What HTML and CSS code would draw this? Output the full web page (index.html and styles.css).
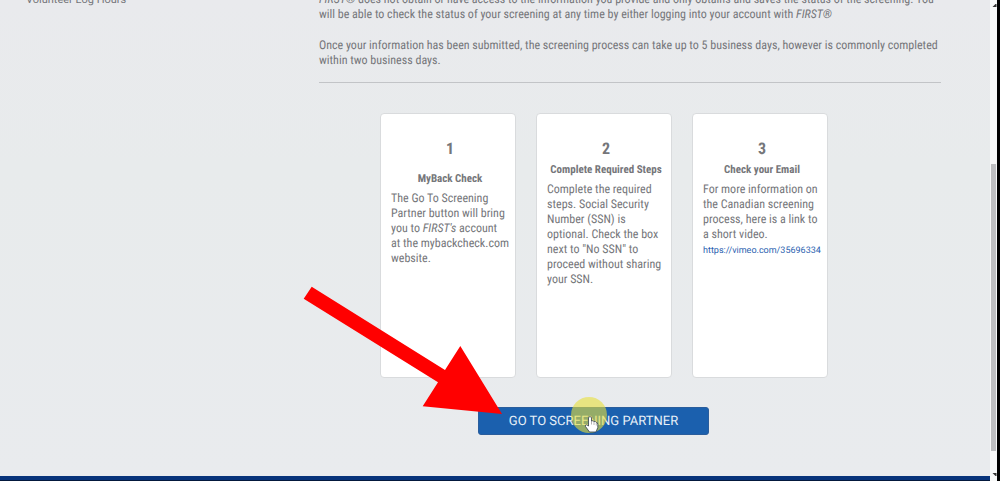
FILE: index.html
```html
<!DOCTYPE html>
<html lang="en">
<head>
<meta charset="utf-8">
<meta name="viewport" content="width=device-width, initial-scale=1">
<title>Youth Protection Screening</title>
<link rel="stylesheet" href="styles.css">
</head>
<body>
<div class="window">
  <div class="page">
    <div class="layout">
      <nav class="sidebar"><a href="#hours">Volunteer Log Hours</a></nav>
      <main class="content">
        <p><em>FIRST</em>® does not obtain or have access to the information you provide and only obtains and saves the status of the screening. You<br>will be able to check the status of your screening at any time by either logging into your account with <em>FIRST®</em></p>
        <p>Once your information has been submitted, the screening process can take up to 5 business days, however is commonly completed<br>within two business days.</p>
        <hr class="rule">
        <div class="steps">
          <section class="card">
            <div class="number">1</div>
            <h2 class="title title-low">MyBack Check</h2>
            <p>The Go To Screening<br>Partner button will bring<br>you to <em>FIRST's</em> account<br>at the mybackcheck.com<br>website.</p>
          </section>
          <section class="card">
            <div class="number">2</div>
            <h2 class="title">Complete Required Steps</h2>
            <p>Complete the required<br>steps. Social Security<br>Number (SSN) is<br>optional. Check the box<br>next to "No SSN" to<br>proceed without sharing<br>your SSN.</p>
          </section>
          <section class="card">
            <div class="number">3</div>
            <h2 class="title">Check your Email</h2>
            <p>For more information on<br>the Canadian screening<br>process, here is a link to<br>a short video.<br><a class="link" href="https://vimeo.com/35696334">https://vimeo.com/35696334</a></p>
          </section>
        </div>
        <div class="actions"><button class="go" type="button">GO TO SCREENING PARTNER</button></div>
      </main>
    </div>
    <footer class="footer"></footer>
  </div>
  <div class="scrollbar">
    <svg class="cap" viewBox="0 0 6 9"><path d="M2 7 L5 4 L6 4 L6 7 Z" fill="#333"/></svg>
    <div class="thumb"></div>
    <svg class="cap cap-end" viewBox="0 0 6 9"><path d="M2 1 H6 V4 H5 Z" fill="#333"/></svg>
  </div>
</div>
<svg class="overlay" width="1000" height="481" viewBox="0 0 1000 481" aria-hidden="true">
  <circle cx="589" cy="415" r="18" fill="#e8e038" fill-opacity=".6"/>
  <path d="M588.5 426 V417.5 Q590 415.600 591.500 417.500 V421 Q593 420.200 594 421.500 Q595.500 420.900 596.300 422.500 Q597.800 422.400 597.800 424.500 V427.500 L596 432 H589.500 L585.500 426.500 Q585 424.500 586.800 424.800 Z" fill="#fff" stroke="#34404d" stroke-width=".8"/>
  <path d="M591.500 421 V424.500 M594 422 V425 M596.300 423 V425.500" stroke="#666" stroke-width=".5"/>
  <path d="M311.700 286.700 L445 370 L460.300 346 L502 414 L422.700 406.300 L438 382.300 L303.700 298.700 Z" fill="#f00"/>
</svg>
</body>
</html>
```
FILE: styles.css
```css
* { box-sizing: border-box; }
body {
  margin: 0;
  overflow: hidden;
  background: #e9ebed;
  color: #75767a;
  font: 12px/15px "Roboto Condensed", Roboto, sans-serif;
  text-rendering: geometricPrecision;
}
.window {
  display: grid;
  grid-template-columns: minmax(0, 1fr) 7px;
  height: 100vh;
  overflow: hidden;
  border-right: 3px solid #000;
}
.page {
  display: flex;
  flex-direction: column;
  min-height: 0;
  background: linear-gradient(#e9eaed, #e8ebec 35%, #e9ebee);
}
.layout {
  display: grid;
  grid-template-columns: 319px minmax(0, 1fr);
  flex: 1;
  min-height: 0;
  margin-top: -8px;
}
.sidebar { padding-left: 26px; font-family: Roboto, sans-serif; font-size: 11px; }
.sidebar a { color: inherit; text-decoration: none; }
.content { padding-right: 49px; white-space: nowrap; }
.content p { margin: 0 0 16px; }
.content > p:nth-of-type(2) { margin-bottom: 14px; }
.rule { margin: 0; border: 0; border-top: 1px solid #c2c4c7; }
.steps {
  display: flex;
  justify-content: center;
  gap: 20px;
  margin: 30px 52px 0 0;
}
.card {
  width: 136px;
  height: 265px;
  padding: 25px 6px 0 10px;
  border: 1px solid #d9dbdd;
  border-radius: 4px;
  background: #fff;
}
.content .card p { margin: 5px 0 0; }
.number {
  font-size: 16px;
  font-weight: 700;
  line-height: 20px;
  text-align: center;
}
.title {
  display: flex;
  justify-content: center;
  margin: 3px 0 0;
  font-size: 11px;
  font-weight: 700;
  line-height: 15px;
}
.title-low { margin-top: 12px; }
.link { color: #2b5fb0; font-family: Roboto, sans-serif; font-size: 9px; text-decoration: none; }
.actions { display: flex; justify-content: center; margin: 29px 73px 0 0; }
.go {
  width: 231px;
  height: 28px;
  padding: 2px 0 0;
  border: 1px solid #2a5d9c;
  border-radius: 3px;
  background: #1b60ae;
  color: #e8f0f8;
  font: 13px/18px Roboto, sans-serif;
  text-rendering: inherit;
}
.footer { height: 5px; background: #07337a; border-bottom: 1px solid #03183c; }
.scrollbar { display: flex; flex-direction: column; background: #f7f8f8; }
.cap { width: 7px; height: 9px; }
.thumb { width: 5px; height: 287px; margin: 155px 0 0 1px; background: #bdbec0; }
.cap-end { margin-top: auto; }
.overlay { position: absolute; top: 0; left: 0; pointer-events: none; }
```
